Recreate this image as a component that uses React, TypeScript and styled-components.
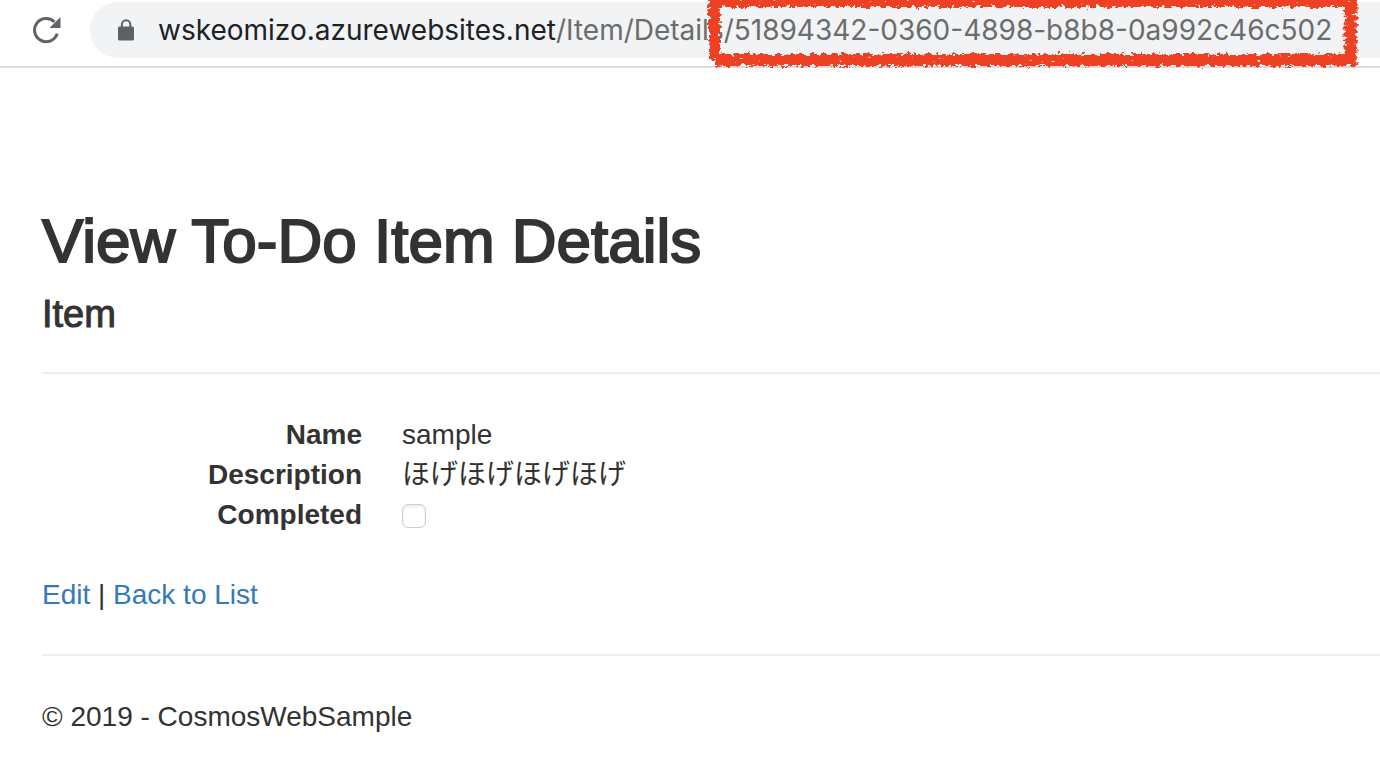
import React from "react";
import styled, { createGlobalStyle } from "styled-components";

const GlobalStyle = createGlobalStyle`
  *, *::before, *::after { box-sizing: border-box; }
  html { overflow-x: hidden; }
  body {
    margin: 0;
    background: #fff;
    color: #333;
    font-family: "Liberation Sans", "Noto Sans CJK JP", sans-serif;
    font-size: 28px;
    line-height: 40px;
  }
`;

const Toolbar = styled.header`
  display: flex;
  align-items: flex-start;
  gap: 28px;
  height: 68px;
  padding: 2px 0 0 33px;
  border-bottom: 2px solid #dadbe1;
`;

const ReloadButton = styled.button`
  display: flex;
  align-items: center;
  height: 56px;
  padding: 0;
  border: 0;
  background: none;
`;

const AddressBar = styled.div`
  display: flex;
  flex: 1;
  align-items: center;
  gap: 23px;
  min-width: 0;
  height: 56px;
  padding-left: 28px;
  border-radius: 28px 0 0 28px;
  background: #f1f3f4;
`;

const Url = styled.div`
  color: #6b6c6e;
  font-family: Inter, sans-serif;
  font-size: 28px;
  white-space: nowrap;
`;

const Host = styled.span`
  color: #202124;
`;

const Marked = styled.span`
  position: relative;
  display: inline-block;
`;

const MarkerFrame = styled.svg`
  position: absolute;
  top: -10px;
  left: -18px;
  width: calc(100% + 44px);
  height: 72px;
  overflow: visible;
  pointer-events: none;
`;

const Page = styled.main`
  padding: 139px 0 0 42px;
`;

const Title = styled.h2`
  margin: 0 0 20px;
  font-size: 62px;
  font-weight: 400;
  line-height: 68px;
  -webkit-text-stroke: 2px #333;
`;

const Subtitle = styled.h4`
  margin: 0;
  font-size: 38px;
  font-weight: 400;
  line-height: 38px;
  -webkit-text-stroke: 1px #333;
`;

const Rule = styled.hr`
  height: 2px;
  margin: 39px 0 41px;
  border: 0;
  background: #eee;
`;

const Fields = styled.dl`
  display: grid;
  grid-template-columns: 320px 1fr;
  column-gap: 40px;
  margin: 0 0 40px;
`;

const Term = styled.dt`
  font-weight: 700;
  text-align: right;
`;

const Value = styled.dd`
  display: flex;
  align-items: center;
  height: 40px;
  margin: 0;
`;

const Checkbox = styled.input`
  appearance: none;
  width: 24px;
  height: 24px;
  margin: 2px 0 0;
  border: 1px solid #cfcfcf;
  border-radius: 6px;
  background: #fff;
  box-shadow: inset 0 2px 3px #ececec;
`;

const Link = styled.a`
  color: #337ab7;
  text-decoration: none;
`;

const Footer = styled.footer`
  padding-bottom: 34px;
`;

const ReloadIcon = () => (
  <svg width="29" height="28" viewBox="0 0 29 28" aria-hidden="true">
    <path d="M24.2 17.6A11.6 11.6 0 1 1 21.5 6" fill="none" stroke="#5f6368" strokeWidth="3" />
    <path d="M27.5 1v11h-11z" fill="#5f6368" />
  </svg>
);

const LockIcon = () => (
  <svg width="17" height="22" viewBox="0 0 17 22" aria-hidden="true">
    <path d="M3.9 8V5.4a4.2 4.2 0 0 1 8.4 0V8" fill="none" stroke="#5f6063" strokeWidth="2" />
    <rect x="0" y="7.5" width="16" height="14" rx="1.5" fill="#5f6063" />
  </svg>
);

const Marker = () => (
  <MarkerFrame aria-hidden="true">
    <defs>
      <filter id="crayon" x="-5%" y="-20%" width="110%" height="140%" colorInterpolationFilters="sRGB">
        <feTurbulence type="fractalNoise" baseFrequency="0.2 0.3" numOctaves="3" seed="7" result="grain" />
        <feDisplacementMap
          in="SourceGraphic"
          in2="grain"
          scale="9"
          xChannelSelector="R"
          yChannelSelector="G"
          result="rough"
        />
        <feTurbulence type="fractalNoise" baseFrequency="0.18 0.3" numOctaves="2" seed="21" />
        <feColorMatrix values="0 0 0 0 0  0 0 0 0 0  0 0 0 0 0  10 0 0 0 -7.4" result="specks" />
        <feComposite in="rough" in2="specks" operator="out" />
      </filter>
    </defs>
    <g filter="url(#crayon)" fill="#ee4023">
      <rect x="4" y="-6" width="99%" height="13" />
      <rect x="3" y="-2" width="11" height="61" />
      <rect x="9" y="54" width="98%" height="12" />
      <svg x="100%" overflow="visible">
        <rect x="-14" y="-2" width="12" height="68" />
      </svg>
    </g>
  </MarkerFrame>
);

export default function App() {
  return (
    <>
      <GlobalStyle />
      <Toolbar>
        <ReloadButton type="button" aria-label="Reload">
          <ReloadIcon />
        </ReloadButton>
        <AddressBar>
          <LockIcon />
          <Url role="textbox" aria-label="Address" aria-readonly="true">
            <Host>wskeomizo.azurewebsites.net</Host>
            /Item/Details
            <Marked>
              /51894342-0360-4898-b8b8-0a992c46c502
              <Marker />
            </Marked>
          </Url>
        </AddressBar>
      </Toolbar>
      <Page>
        <Title>View To-Do Item Details</Title>
        <Subtitle>Item</Subtitle>
        <Rule />
        <Fields>
          <Term>Name</Term>
          <Value>sample</Value>
          <Term>Description</Term>
          <Value>ほげほげほげほげ</Value>
          <Term>
            <label htmlFor="completed">Completed</label>
          </Term>
          <Value>
            <Checkbox id="completed" type="checkbox" />
          </Value>
        </Fields>
        <nav>
          <Link href="#edit">Edit</Link> | <Link href="#list">Back to List</Link>
        </nav>
        <Rule />
        <Footer>© 2019 - CosmosWebSample</Footer>
      </Page>
    </>
  );
}
